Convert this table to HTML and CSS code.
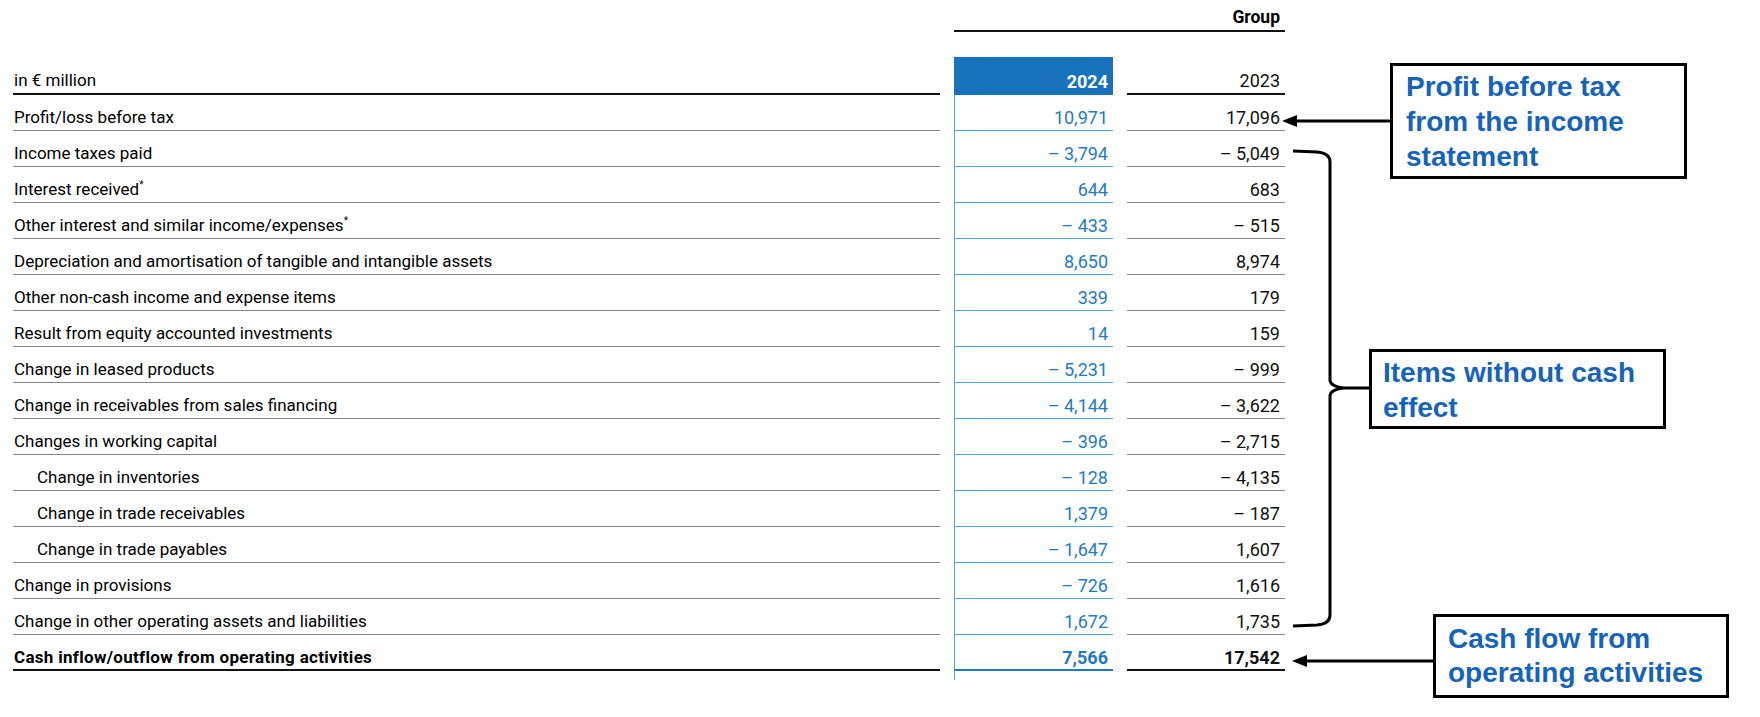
FILE: index.html
```html
<!DOCTYPE html>
<html lang="en">
<head>
<meta charset="utf-8">
<title>Cash flow from operating activities</title>
<link rel="stylesheet" href="styles.css">
</head>
<body>
<div class="page">
  <div class="fin">
    <div class="group-row"><span class="group">Group</span></div>
    <div class="grid">
      <div class="hd lbl">in € million</div>
      <div class="hd cur">2024</div>
      <div class="hd prev">2023</div>

      <div class="lbl">Profit/loss before tax</div>
      <div class="cur">10,971</div>
      <div class="prev">17,096</div>

      <div class="lbl">Income taxes paid</div>
      <div class="cur">– 3,794</div>
      <div class="prev">– 5,049</div>

      <div class="lbl">Interest received<sup>*</sup></div>
      <div class="cur">644</div>
      <div class="prev">683</div>

      <div class="lbl">Other interest and similar income/expenses<sup>*</sup></div>
      <div class="cur">– 433</div>
      <div class="prev">– 515</div>

      <div class="lbl">Depreciation and amortisation of tangible and intangible assets</div>
      <div class="cur">8,650</div>
      <div class="prev">8,974</div>

      <div class="lbl">Other non-cash income and expense items</div>
      <div class="cur">339</div>
      <div class="prev">179</div>

      <div class="lbl">Result from equity accounted investments</div>
      <div class="cur">14</div>
      <div class="prev">159</div>

      <div class="lbl">Change in leased products</div>
      <div class="cur">– 5,231</div>
      <div class="prev">– 999</div>

      <div class="lbl">Change in receivables from sales financing</div>
      <div class="cur">– 4,144</div>
      <div class="prev">– 3,622</div>

      <div class="lbl">Changes in working capital</div>
      <div class="cur">– 396</div>
      <div class="prev">– 2,715</div>

      <div class="lbl sub">Change in inventories</div>
      <div class="cur">– 128</div>
      <div class="prev">– 4,135</div>

      <div class="lbl sub">Change in trade receivables</div>
      <div class="cur">1,379</div>
      <div class="prev">– 187</div>

      <div class="lbl sub">Change in trade payables</div>
      <div class="cur">– 1,647</div>
      <div class="prev">1,607</div>

      <div class="lbl">Change in provisions</div>
      <div class="cur">– 726</div>
      <div class="prev">1,616</div>

      <div class="lbl">Change in other operating assets and liabilities</div>
      <div class="cur">1,672</div>
      <div class="prev">1,735</div>

      <div class="lbl total">Cash inflow/outflow from operating activities</div>
      <div class="cur total">7,566</div>
      <div class="prev total">17,542</div>

      <div class="tail"></div>
    </div>
  </div>

  <div class="note note-profit">Profit before tax<br>from the income<br>statement</div>
  <div class="note note-items">Items without cash<br>effect</div>
  <div class="note note-cash">Cash flow from<br>operating activities</div>

  <svg class="links" width="1760" height="717" viewBox="0 0 1760 717" aria-hidden="true">
    <g fill="none" stroke="#000" stroke-width="3">
      <line x1="1293" y1="121" x2="1391" y2="121"/>
      <path d="M1293 151 L1317 152 Q1330 153 1330 162 L1330 380 Q1330 386 1343 388 Q1330 390 1330 396 L1330 615 Q1330 624 1317 625 L1293 626"/>
      <line x1="1342" y1="388" x2="1370" y2="388"/>
      <line x1="1303" y1="661" x2="1434" y2="661"/>
    </g>
    <g fill="#000">
      <polygon points="1282,121 1297,115 1297,127"/>
      <polygon points="1292,661 1307,655 1307,667"/>
    </g>
  </svg>
</div>
</body>
</html>
```

FILE: styles.css
```css
* {
  box-sizing: border-box;
}

html, body {
  margin: 0;
  padding: 0;
  background: #fff;
}

.page {
  position: relative;
  width: 1760px;
  height: 717px;
  overflow: hidden;
  padding-left: 13px;
  font-family: "Roboto", "Liberation Sans", sans-serif;
  color: #000;
}

.fin {
  width: 1272px;
}

.group-row {
  margin-left: 941px;
  width: 331px;
  height: 32px;
  border-bottom: 2px solid #111;
  padding: 7px 5px 0 0;
  text-align: right;
  margin-bottom: 25px;
}

.group {
  font-weight: 700;
  font-size: 17.5px;
  line-height: 20px;
}

.grid {
  display: grid;
  grid-template-columns: 927px 159px 158px;
  column-gap: 14px;
}

.grid > div {
  height: 36px;
  line-height: 21px;
  padding-top: 12px;
  white-space: nowrap;
}

.lbl {
  font-size: 17px;
  padding-left: 1px;
  border-bottom: 1px solid #858585;
}

.lbl.sub {
  padding-left: 24px;
}

.lbl sup {
  font-size: 10px;
  line-height: 0;
  vertical-align: 7px;
}

.cur,
.prev {
  font-size: 18px;
  text-align: right;
  padding-right: 5px;
}

.cur {
  color: #1f7bc3;
  border-left: 1px solid #4ea6e0;
  border-bottom: 1px solid #4ea6e0;
}

.prev {
  color: #111;
  border-bottom: 1px solid #858585;
}

.grid > .hd {
  height: 38px;
  padding-top: 13px;
  border-bottom: 2px solid #111;
}

.grid > .hd.cur {
  background: #1872bc;
  color: #fff;
  font-weight: 700;
  border-bottom-color: #1872bc;
  border-left-color: #1872bc;
  padding-top: 14px;
}

.grid > .total {
  font-weight: 700;
  border-bottom: 2px solid #111;
}

.grid > .lbl.total {
  letter-spacing: 0.3px;
}

.grid > .cur.total {
  border-bottom-color: #1f7bc3;
}

.grid > .tail {
  grid-column: 2;
  height: 9px;
  padding: 0;
  border-left: 1px solid #4ea6e0;
}

.note {
  position: absolute;
  border: 3px solid #000;
  background: #fff;
  font-family: "Liberation Sans", Arial, sans-serif;
  font-weight: 700;
  font-size: 28px;
  line-height: 35px;
  color: #1664b9;
  white-space: nowrap;
}

.note-profit {
  left: 1390px;
  top: 63px;
  width: 297px;
  height: 116px;
  padding: 3px 0 0 13px;
}

.note-items {
  left: 1369px;
  top: 349px;
  width: 297px;
  height: 80px;
  padding: 3px 0 0 11px;
}

.note-cash {
  left: 1433px;
  top: 614px;
  width: 296px;
  height: 84px;
  padding: 5px 0 0 12px;
  line-height: 34px;
}

.links {
  position: absolute;
  left: 0;
  top: 0;
  pointer-events: none;
}
```
